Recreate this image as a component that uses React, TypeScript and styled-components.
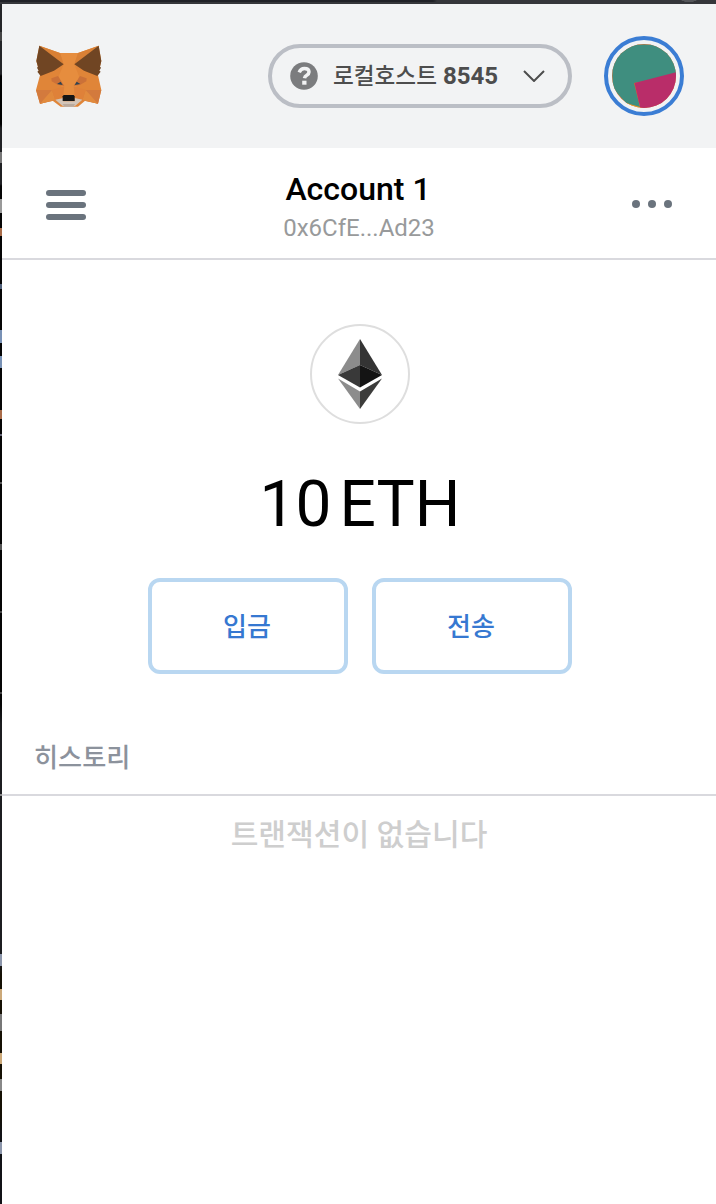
import React from "react";
import styled, { createGlobalStyle } from "styled-components";

const GlobalStyle = createGlobalStyle`
  * { box-sizing: border-box; }
  body {
    margin: 0;
    background: #fff;
    font-family: Roboto, "Noto Sans CJK KR", sans-serif;
  }
  svg { display: block; }
`;

const Screen = styled.div`
  display: grid;
  grid-template-columns: 2px 1fr;
  grid-template-rows: 4px 1fr;
  height: 1204px;
  overflow: hidden;
`;

const TopEdge = styled.div`
  grid-column: 1 / 3;
  background:
    radial-gradient(ellipse 8px 2px at 689px 0, #55565a 90%, transparent),
    linear-gradient(90deg, #202127 433px, transparent 437px) 0 0 / 100% 2px no-repeat,
    #35363a;
`;

const marks: Array<[number, number, string]> = [
  [28, 9, "#444"], [148, 11, "#777"], [195, 14, "#999"], [224, 8, "#a86b48"],
  [280, 5, "#50607a"], [326, 13, "#7891b5"], [352, 12, "#7891b5"],
  [406, 9, "#a86b48"], [430, 2, "#667"], [478, 2, "#555"], [540, 6, "#555"],
  [607, 2, "#444"], [688, 2, "#444"], [790, 2, "#888"], [950, 12, "#8b95aa"],
  [985, 11, "#cba878"], [1010, 17, "#777"], [1049, 11, "#cba878"],
  [1075, 12, "#888"], [1138, 12, "#8b95aa"],
];

const LeftEdge = styled.div`
  background:
    ${marks.map(([y, h, c]) => `linear-gradient(${c}, ${c}) 0 ${y}px / 2px ${h}px no-repeat`).join(",")},
    linear-gradient(#242528 70px, #000 72px, #000 120px, #202124 124px, #202124 180px, #050505 182px, #050505 700px, #1c1d20 720px, #1c1d20 960px, #151004 970px, #151004 1110px, #111216 1130px);
`;

const Wallet = styled.main`
  display: flex;
  flex-direction: column;
  min-width: 0;
  background: #fff;
`;

const Header = styled.header`
  display: flex;
  align-items: center;
  height: 144px;
  padding: 0 32px;
  background: #f2f3f4;
`;

const NetworkPill = styled.button`
  display: flex;
  align-items: center;
  width: 304px;
  height: 64px;
  margin: 0 32px 0 auto;
  padding: 0 23px 0 18px;
  border: 4px solid #bbbec5;
  border-radius: 32px;
  background: transparent;
  color: #4d4d4d;
  font-family: inherit;
`;

const NetworkName = styled.span`
  display: flex;
  align-items: baseline;
  gap: 6px;
  flex: 1;
  margin-left: 15px;
  font-size: 22.6px;
  font-weight: 500;
  line-height: 32px;
  white-space: nowrap;
`;

const Port = styled.span`
  font-size: 24px;
  font-weight: 700;
`;

const Avatar = styled.div`
  width: 80px;
  height: 80px;
  padding: 4px;
  border: 4px solid #3b7dd4;
  border-radius: 50%;
`;

const AccountBar = styled.section`
  display: flex;
  align-items: center;
  justify-content: space-between;
  height: 112px;
  padding: 2px 44px 0;
  border-bottom: 2px solid #d9d9de;
`;

const MenuIcon = styled.div`
  display: grid;
  gap: 6px;
  width: 40px;
  margin-top: 2px;
`;

const MenuLine = styled.span`
  height: 6px;
  border-radius: 3px;
  background: #6a737d;
`;

const Account = styled.div`
  display: flex;
  flex-direction: column;
  align-items: center;
  padding: 8px 2px 0 0;
`;

const AccountName = styled.div`
  font-size: 32px;
  font-weight: 500;
  line-height: 40px;
  color: #000;
`;

const Address = styled.div`
  font-size: 24px;
  line-height: 38px;
  color: #989a9b;
  padding-left: 2px;
`;

const Dots = styled.div`
  display: flex;
  gap: 8px;
`;

const Dot = styled.span`
  width: 8px;
  height: 8px;
  border-radius: 50%;
  background: #6a737d;
`;

const Overview = styled.section`
  display: flex;
  flex-direction: column;
  align-items: center;
  padding: 64px 0 0 2px;
`;

const Token = styled.div`
  display: flex;
  align-items: center;
  justify-content: center;
  width: 100px;
  height: 100px;
  border: 2px solid #dedede;
  border-radius: 50%;
`;

const Balance = styled.div`
  display: flex;
  gap: 8px;
  margin-top: 44px;
  font-size: 64px;
  line-height: 74px;
  color: #000;
`;

const Amount = styled.span``;

const Actions = styled.div`
  display: flex;
  gap: 24px;
  margin-top: 36px;
`;

const ActionButton = styled.button`
  width: 200px;
  height: 96px;
  padding: 0 2px 3px 0;
  border: 4px solid #b9d7f1;
  border-radius: 12px;
  background: #fff;
  color: #3678d1;
  font-family: inherit;
  font-size: 26px;
  font-weight: 500;
`;

const HistoryTitle = styled.h2`
  height: 78px;
  margin: 44px 0 0;
  padding: 18px 32px 0;
  border-bottom: 2px solid #d9d9de;
  color: #8c929c;
  font-size: 26.2px;
  font-weight: 500;
  line-height: 44px;
`;

const Empty = styled.p`
  margin: 16px 0 0;
  text-align: center;
  color: #cecece;
  font-size: 30.1px;
  font-weight: 500;
  line-height: 46px;
`;

const Fox = () => (
  <svg width="70" height="64" viewBox="30 24 210 192">
    <path fill="#e08538" d="M46 29L108 51H162L224 29L232 75L222 118L232 162L222 203L185 193L162 212H110L84 193L48 204L36 162L48 118L37 75Z" />
    <path fill="#e68d3e" d="M108 51L119 85L104 121L120 181H150L165 121L151 85L162 51Z" />
    <path fill="#d98035" d="M46 29L108 51L119 85ZM224 29L162 51L151 85Z" />
    <path fill="#704523" d="M46 29L119 85L90 104L50 120L40 107L44 104L39 95L42 92L37 75ZM224 29L151 85L180 104L220 120L230 107L226 104L231 95L228 92L232 75Z" />
    <path fill="#cb7138" d="M82 127L102 120L121 150L101 146L83 136ZM188 127L168 120L149 150L169 146L187 136Z" />
    <path fill="#d37a3d" d="M36 162L84 162L94 193L48 203ZM232 162L185 162L175 193L222 203Z" />
    <path fill="#e18a3d" d="M48 203L84 162L94 193ZM222 203L185 162L175 193Z" />
    <path fill="#df8139" d="M84 162L121 151L117 183L94 193ZM185 162L149 151L153 183L175 193Z" />
    <path fill="#d2c4b8" d="M94 191L118 186V196H152V186L175 191L154 209L146 212H124L115 209Z" />
    <path fill="#baa99c" d="M116 204h37l-4 8h-28z" />
    <path fill="#161616" d="M119 177h30l3 4v14h-36v-14z" />
    <path fill="#2c4352" d="M99 144l11-7 6 10zM169 144l-11-7-6 10z" />
  </svg>
);

const App = () => (
  <>
    <GlobalStyle />
    <Screen>
      <TopEdge />
      <LeftEdge />
      <Wallet>
        <Header>
          <Fox />
          <NetworkPill>
            <svg width="28" height="28" viewBox="0 0 28 28">
              <circle cx="14" cy="14" r="13.8" fill="#7b7c7e" />
              <path d="M9.2 10.3Q10.7 6.5 14.3 6.5q4.7 0 4.7 3.6 0 1.9-2.2 3.1-2 1.1-2.3 3.1" fill="none" stroke="#f2f3f4" strokeWidth="3.5" />
              <path d="M12.2 18.7h4.3v4h-4.3z" fill="#f2f3f4" />
            </svg>
            <NetworkName>로컬호스트<Port>8545</Port></NetworkName>
            <svg width="22" height="12" viewBox="0 0 22 12">
              <path d="M1 1l10 10L21 1" fill="none" stroke="#4d4d4d" strokeWidth="2" />
            </svg>
          </NetworkPill>
          <Avatar>
            <svg width="64" height="64" viewBox="0 0 64 64">
              <defs><clipPath id="disc"><circle cx="32" cy="32" r="32" /></clipPath></defs>
              <g clipPath="url(#disc)">
                <path fill="#e06c2c" d="M0 0h64v64H0z" />
                <path fill="#f19a20" d="M15 58h20v6H15z" />
                <path fill="#3f8e7f" d="M0 1Q32 0 64 1v30L22 39l6 24-14-4L.6 44z" />
                <path fill="#b92d69" d="M22.5 39L65 28v37H28.5z" />
              </g>
            </svg>
          </Avatar>
        </Header>
        <AccountBar>
          <MenuIcon><MenuLine /><MenuLine /><MenuLine /></MenuIcon>
          <Account>
            <AccountName>Account 1</AccountName>
            <Address>0x6CfE...Ad23</Address>
          </Account>
          <Dots><Dot /><Dot /><Dot /></Dots>
        </AccountBar>
        <Overview>
          <Token>
            <svg width="44" height="70" viewBox="0 0 44 70">
              <path fill="#8c8c8c" d="M22 0v26L0 36z" />
              <path fill="#343434" d="M22 0v26l22 10z" />
              <path fill="#393939" d="M22 26v22.5L0 36z" />
              <path fill="#141414" d="M22 26v22.5L44 36z" />
              <path fill="#8c8c8c" d="M0 39.5l22 13V70z" />
              <path fill="#3c3c3b" d="M44 39.5l-22 13V70z" />
            </svg>
          </Token>
          <Balance><Amount>10</Amount><Amount>ETH</Amount></Balance>
          <Actions>
            <ActionButton>입금</ActionButton>
            <ActionButton>전송</ActionButton>
          </Actions>
        </Overview>
        <HistoryTitle>히스토리</HistoryTitle>
        <Empty>트랜잭션이 없습니다</Empty>
      </Wallet>
    </Screen>
  </>
);

export default App;
